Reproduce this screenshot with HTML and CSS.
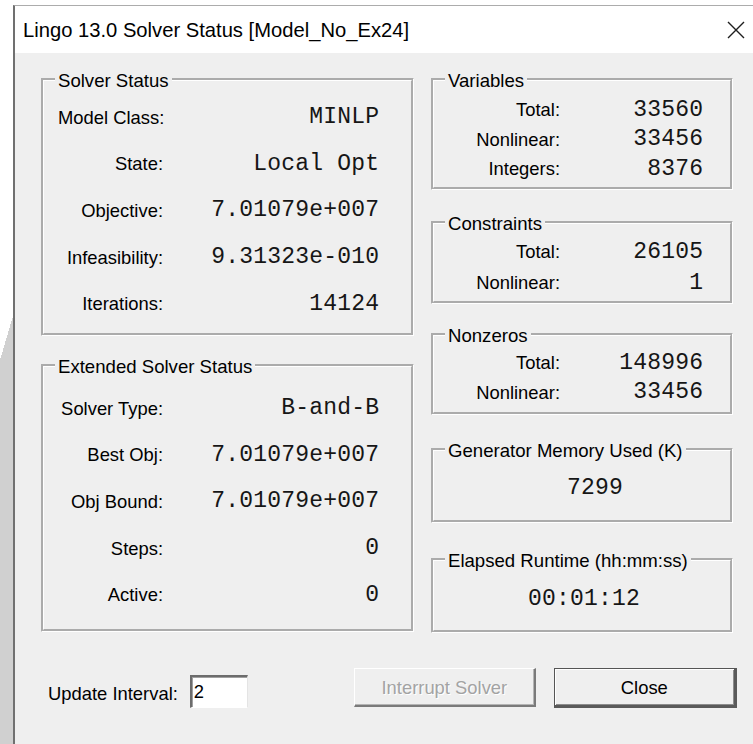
FILE: index.html
```html
<!DOCTYPE html>
<html lang="en">
<head>
<meta charset="utf-8">
<title>Lingo 13.0 Solver Status</title>
<link rel="stylesheet" href="styles.css">
</head>
<body>
<div class="screen">
  <div class="desk"></div>
  <div class="window">
    <div class="titlebar">
      <span class="title">Lingo 13.0 Solver Status [Model_No_Ex24]</span>
      <svg class="close-x" width="18" height="18" viewBox="0 0 18 18" aria-hidden="true">
        <path d="M1 1 L17 17 M17 1 L1 17" stroke="#1e1e1e" stroke-width="1.4" fill="none"/>
      </svg>
    </div>
    <div class="client">
      <div class="columns">
        <div class="col col-left">
          <section class="group g-status">
            <div class="legend">Solver Status</div>
            <div class="rows rows-left">
              <span class="lbl">Model Class:</span><span class="val">MINLP</span>
              <span class="lbl">State:</span><span class="val">Local Opt</span>
              <span class="lbl">Objective:</span><span class="val">7.01079e+007</span>
              <span class="lbl">Infeasibility:</span><span class="val">9.31323e-010</span>
              <span class="lbl">Iterations:</span><span class="val">14124</span>
            </div>
          </section>
          <section class="group g-ext">
            <div class="legend">Extended Solver Status</div>
            <div class="rows rows-left">
              <span class="lbl">Solver Type:</span><span class="val">B-and-B</span>
              <span class="lbl">Best Obj:</span><span class="val">7.01079e+007</span>
              <span class="lbl">Obj Bound:</span><span class="val">7.01079e+007</span>
              <span class="lbl">Steps:</span><span class="val">0</span>
              <span class="lbl">Active:</span><span class="val">0</span>
            </div>
          </section>
        </div>
        <div class="col col-right">
          <section class="group g-vars">
            <div class="legend">Variables</div>
            <div class="rows rows-right">
              <span class="lbl">Total:</span><span class="val">33560</span>
              <span class="lbl">Nonlinear:</span><span class="val">33456</span>
              <span class="lbl">Integers:</span><span class="val">8376</span>
            </div>
          </section>
          <section class="group g-cons">
            <div class="legend">Constraints</div>
            <div class="rows rows-right">
              <span class="lbl">Total:</span><span class="val">26105</span>
              <span class="lbl">Nonlinear:</span><span class="val">1</span>
            </div>
          </section>
          <section class="group g-nz">
            <div class="legend">Nonzeros</div>
            <div class="rows rows-right">
              <span class="lbl">Total:</span><span class="val">148996</span>
              <span class="lbl">Nonlinear:</span><span class="val">33456</span>
            </div>
          </section>
          <section class="group g-mem">
            <div class="legend">Generator Memory Used (K)</div>
            <div class="single mem-val">7299</div>
          </section>
          <section class="group g-time">
            <div class="legend">Elapsed Runtime (hh:mm:ss)</div>
            <div class="single time-val">00:01:12</div>
          </section>
        </div>
      </div>
      <div class="footer">
        <span class="upd-label">Update Interval:</span>
        <div class="upd-input">2</div>
        <div class="btn btn-interrupt">Interrupt Solver</div>
        <div class="btn btn-close">Close</div>
      </div>
    </div>
  </div>
</div>
</body>
</html>
```

FILE: styles.css
```css
* { box-sizing: border-box; }

html, body { margin: 0; padding: 0; }

body {
  width: 753px;
  height: 744px;
  overflow: hidden;
  background: #fff;
  font-family: "Liberation Sans", Arial, sans-serif;
  color: #000;
}

.screen {
  display: flex;
  height: 744px;
}

/* strip of desktop visible left of the dialog */
.desk {
  width: 13px;
  flex: none;
  background:
    linear-gradient(to bottom right, transparent 50%, #d0d0d0 50%) 0 316px / 13px 44px no-repeat,
    linear-gradient(#d0d0d0, #d0d0d0) 0 360px / 13px 400px no-repeat,
    #fff;
}

.window {
  flex: 1;
  min-width: 0;
  margin-top: 5px;
  border-top: 1px solid #acacac;
  border-left: 2px solid #707070;
  display: flex;
  flex-direction: column;
}

.titlebar {
  height: 47px;
  flex: none;
  background: #fff;
  display: flex;
  align-items: center;
  padding-left: 8px;
}

.title {
  font-size: 20.2px;
  line-height: 24px;
  color: #000;
}

.close-x {
  margin-left: auto;
  margin-right: 8px;
}

.client {
  flex: 1;
  background: #efefef;
  padding: 25px 16px 0 26px;
}

.columns {
  display: flex;
  gap: 17px;
}

.col {
  display: flex;
  flex-direction: column;
}

.col-left { width: 373px; }
.col-right { width: 302px; }

/* etched group frame */
.group {
  border: 3px groove #fff;
  display: flex;
  flex-direction: column;
}

.legend {
  align-self: flex-start;
  margin: -11px 0 0 11px;
  padding: 0 3px;
  background: #efefef;
  font-size: 18.6px;
  line-height: 21px;
}

.rows {
  display: grid;
  align-items: center;
  font-size: 18.4px;
}

.rows-left {
  grid-template-columns: 105px 1fr;
  grid-auto-rows: 46.6px;
  padding: 0 32px 0 14px;
}

.rows-right {
  grid-template-columns: 126px 1fr;
  grid-auto-rows: 29.5px;
  padding: 0 27px 0 0;
}

.lbl {
  text-align: right;
  white-space: nowrap;
  line-height: 21px;
}

.val, .single {
  font-family: "Liberation Mono", "Courier New", monospace;
  font-size: 23px;
  line-height: 26px;
  letter-spacing: 0.2px;
  text-align: right;
  white-space: pre;
  color: #161616;
}

.val { margin-right: -0.2px; }

.g-status { height: 258px; }
.g-status .rows { margin-top: 3px; }

.g-ext { margin-top: 28px; height: 268px; }
.g-ext .rows { margin-top: 8px; }

.g-vars { height: 112px; }
.g-vars .rows { margin-top: 4px; }

.g-cons { margin-top: 31px; height: 83px; }
.g-cons .rows { margin-top: 2px; grid-auto-rows: 31px; }

.g-nz { margin-top: 29px; height: 82px; }
.g-nz .rows { margin-top: 2px; }

.g-mem { margin-top: 33px; height: 75px; }
.g-time { margin-top: 35px; height: 75px; }

.single {
  text-align: left;
  line-height: 29px;
}

.mem-val { margin-top: 13px; padding-left: 133px; }
.time-val { margin-top: 14px; padding-left: 94px; }

.footer {
  display: flex;
  align-items: flex-start;
  margin-top: 35px;
  height: 40px;
  font-size: 18.4px;
}

.upd-label {
  margin: 15px 0 0 7px;
  line-height: 21px;
  white-space: nowrap;
}

.upd-input {
  margin: 7px 0 0 12px;
  width: 58px;
  height: 33px;
  background: #fff;
  border-style: solid;
  border-width: 2px 1px 1px 2px;
  border-color: #6c6c6c #e4e4e4 #fff #6c6c6c;
  box-shadow: inset 1px 1px 0 #a0a0a0;
  padding: 3px 0 0 2px;
  line-height: 24px;
}

.btn {
  display: flex;
  align-items: center;
  justify-content: center;
  background: #efefef;
  line-height: 21px;
  white-space: nowrap;
}

.btn-interrupt {
  margin-left: 106px;
  width: 182px;
  height: 39px;
  border-style: solid;
  border-width: 1px 2px 2px 1px;
  border-color: #fff #7a7a7a #7a7a7a #fff;
  box-shadow: inset -1px -1px 0 #b4b4b4;
  color: #a3a3a3;
  text-shadow: 1px 1px 0 #fff;
}

.btn-close {
  margin-left: 18px;
  width: 183px;
  height: 40px;
  border-style: solid;
  border-width: 1px 3px 3px 1px;
  border-color: #555 #5a5a5a #5a5a5a #555;
  box-shadow: inset 1px 1px 0 #fff, inset -1px -1px 0 #8c8c8c;
  color: #000;
}
```
